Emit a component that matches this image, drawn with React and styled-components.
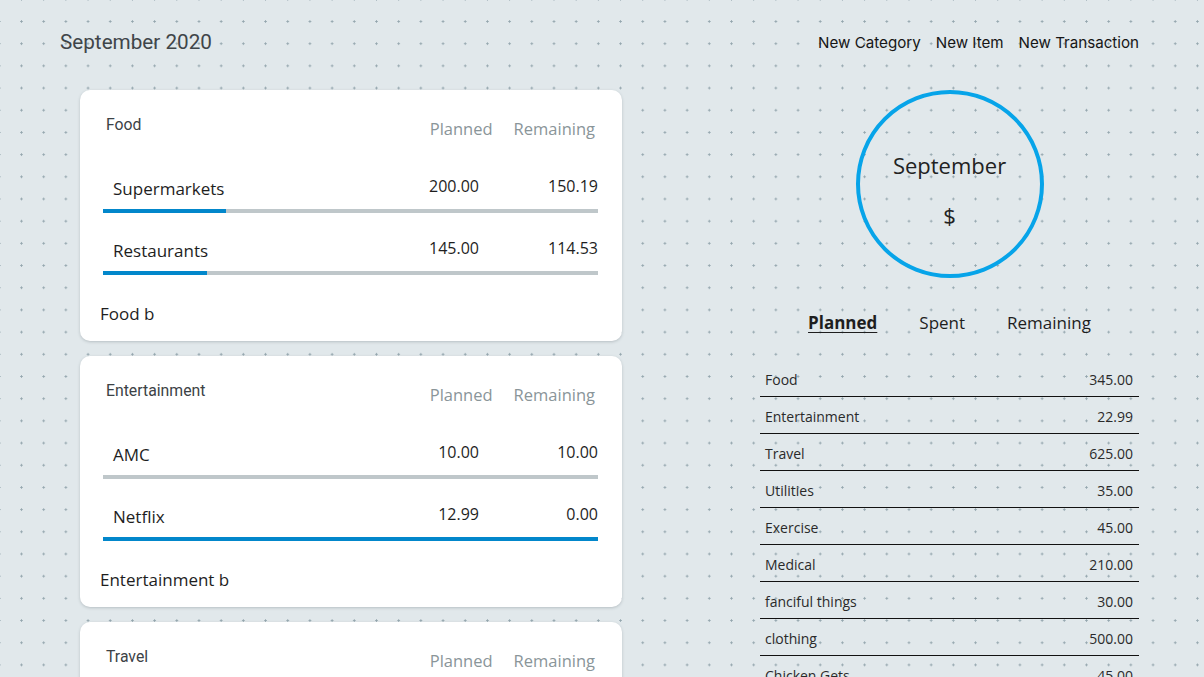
import React from "react";
import styled, { createGlobalStyle } from "styled-components";

const Global = createGlobalStyle`
  html, body { margin: 0; padding: 0; }
  body {
    background-color: #e1e8eb;
    background-image: radial-gradient(circle at center, #93a5ad 0.9px, transparent 1.3px);
    background-size: 22.2px 22.2px;
    background-position: 10.4px 10.4px;
    overflow: hidden;
  }
`;

const BODY_FONT = `"Open Sans", "Lato", sans-serif`;

const Page = styled.div`
  height: 100vh;
  overflow: hidden;
  padding: 0 65px 0 60px;
  box-sizing: border-box;
`;

const Header = styled.header`
  display: flex;
  align-items: center;
  justify-content: space-between;
  height: 84px;
`;

const Title = styled.h1`
  margin: 0;
  font-family: Roboto, sans-serif;
  font-weight: 400;
  font-size: 20.7px;
  color: #3f4549;
`;

const Nav = styled.nav`
  display: flex;
  gap: 15px;
`;

const NavLink = styled.a`
  font-family: Inter, sans-serif;
  font-size: 15.15px;
  color: #161616;
  cursor: pointer;
`;

const Main = styled.main`
  display: flex;
  padding-left: 20px;
  padding-top: 6px;
  gap: 138px;
`;

const LeftColumn = styled.section`
  width: 542px;
  display: flex;
  flex-direction: column;
  gap: 15px;
  flex-shrink: 0;
`;

const Card = styled.div`
  background: #fff;
  border-radius: 10px;
  box-shadow: 0 1px 3px rgba(60, 70, 80, 0.25);
  padding: 24px 24px 15px 23px;
  height: 251px;
  box-sizing: border-box;
`;

const CardHeader = styled.div`
  display: flex;
  align-items: flex-start;
  padding-left: 3px;
  padding-right: 3px;
  height: 25px;
`;

const CategoryName = styled.div`
  flex: 1;
  padding-top: 1px;
  font-family: Roboto, sans-serif;
  font-size: 15.8px;
  line-height: 20px;
  color: #3c4246;
`;

const ColHead = styled.div`
  margin-top: 5px;
  font-family: ${BODY_FONT};
  font-size: 16.5px;
  line-height: 20px;
  color: #8a9599;
  margin-left: ${(p) => p.$gap || 0}px;
`;

const Rows = styled.div`
  margin-top: 35px;
  display: flex;
  flex-direction: column;
  gap: 23px;
`;

const ItemRow = styled.div`
  display: flex;
  flex-direction: column;
`;

const ItemLine = styled.div`
  display: grid;
  grid-template-columns: 1fr 110px 119px;
  align-items: start;
  font-family: ${BODY_FONT};
  color: #1e1e1e;
  height: 35px;
`;

const ItemName = styled.div`
  padding-left: 10px;
  padding-top: 3px;
  font-size: 17px;
  line-height: 24px;
`;

const ItemValue = styled.div`
  text-align: right;
  font-size: 16px;
  line-height: 24px;
`;

const Bar = styled.div`
  height: 4px;
  background: #bfc7ca;
`;

const BarFill = styled.div`
  height: 100%;
  background: #0287cb;
`;

const Footer = styled.div`
  margin-top: 27px;
  margin-left: -3px;
  font-family: ${BODY_FONT};
  font-size: 17px;
  line-height: 24px;
  color: #1e1e1e;
`;

const RightColumn = styled.section`
  width: 379px;
  display: flex;
  flex-direction: column;
  align-items: center;
  flex-shrink: 0;
`;

const Ring = styled.div`
  width: 188px;
  height: 188px;
  border-radius: 50%;
  border: 4px solid #07a4e9;
  box-sizing: border-box;
  display: flex;
  flex-direction: column;
  align-items: center;
  justify-content: center;
  gap: 20px;
  font-family: ${BODY_FONT};
  font-size: 22px;
  color: #222;
  padding-top: 12px;
`;

const RingLine = styled.div`
  line-height: 30px;
`;

const Tabs = styled.div`
  display: flex;
  gap: 42px;
  margin-top: 33px;
`;

const Tab = styled.div`
  font-family: ${BODY_FONT};
  font-size: 17px;
  line-height: 24px;
  color: #1e1e1e;
  font-weight: ${(p) => (p.$active ? 700 : 400)};
  text-decoration: ${(p) => (p.$active ? "underline" : "none")};
  text-underline-offset: 3px;
`;

const List = styled.div`
  width: 100%;
  margin-top: 25px;
`;

const ListRow = styled.div`
  display: flex;
  justify-content: space-between;
  padding: 10px 6px 6px 5px;
  height: 37px;
  box-sizing: border-box;
  border-bottom: 1.5px solid #111;
  font-family: ${BODY_FONT};
  font-size: 14px;
  line-height: 20px;
  color: #2a2a2a;
`;

const categories = [
  {
    name: "Food",
    items: [
      { name: "Supermarkets", planned: 200, remaining: 150.19 },
      { name: "Restaurants", planned: 145, remaining: 114.53 },
    ],
  },
  {
    name: "Entertainment",
    items: [
      { name: "AMC", planned: 10, remaining: 10 },
      { name: "Netflix", planned: 12.99, remaining: 0 },
    ],
  },
  {
    name: "Travel",
    items: [
      { name: "Flights", planned: 400, remaining: 400 },
      { name: "Hotels", planned: 225, remaining: 225 },
    ],
  },
];

const totals = [
  ["Food", "345.00"],
  ["Entertainment", "22.99"],
  ["Travel", "625.00"],
  ["Utilities", "35.00"],
  ["Exercise", "45.00"],
  ["Medical", "210.00"],
  ["fanciful things", "30.00"],
  ["clothing", "500.00"],
  ["Chicken Gets", "45.00"],
];

export default function App() {
  return (
    <>
      <Global />
      <Page>
        <Header>
          <Title>September 2020</Title>
          <Nav>
            <NavLink>New Category</NavLink>
            <NavLink>New Item</NavLink>
            <NavLink>New Transaction</NavLink>
          </Nav>
        </Header>
        <Main>
          <LeftColumn>
            {categories.map((c) => (
              <Card key={c.name}>
                <CardHeader>
                  <CategoryName>{c.name}</CategoryName>
                  <ColHead>Planned</ColHead>
                  <ColHead $gap={21}>Remaining</ColHead>
                </CardHeader>
                <Rows>
                  {c.items.map((it) => {
                    const spent = (it.planned - it.remaining) / it.planned;
                    return (
                      <ItemRow key={it.name}>
                        <ItemLine>
                          <ItemName>{it.name}</ItemName>
                          <ItemValue>{it.planned.toFixed(2)}</ItemValue>
                          <ItemValue>{it.remaining.toFixed(2)}</ItemValue>
                        </ItemLine>
                        <Bar>
                          <BarFill style={{ width: `${spent * 100}%` }} />
                        </Bar>
                      </ItemRow>
                    );
                  })}
                </Rows>
                <Footer>{c.name} b</Footer>
              </Card>
            ))}
          </LeftColumn>
          <RightColumn>
            <Ring>
              <RingLine>September</RingLine>
              <RingLine>$</RingLine>
            </Ring>
            <Tabs>
              <Tab $active>Planned</Tab>
              <Tab>Spent</Tab>
              <Tab>Remaining</Tab>
            </Tabs>
            <List>
              {totals.map(([n, v]) => (
                <ListRow key={n}>
                  <span>{n}</span>
                  <span>{v}</span>
                </ListRow>
              ))}
            </List>
          </RightColumn>
        </Main>
      </Page>
    </>
  );
}
